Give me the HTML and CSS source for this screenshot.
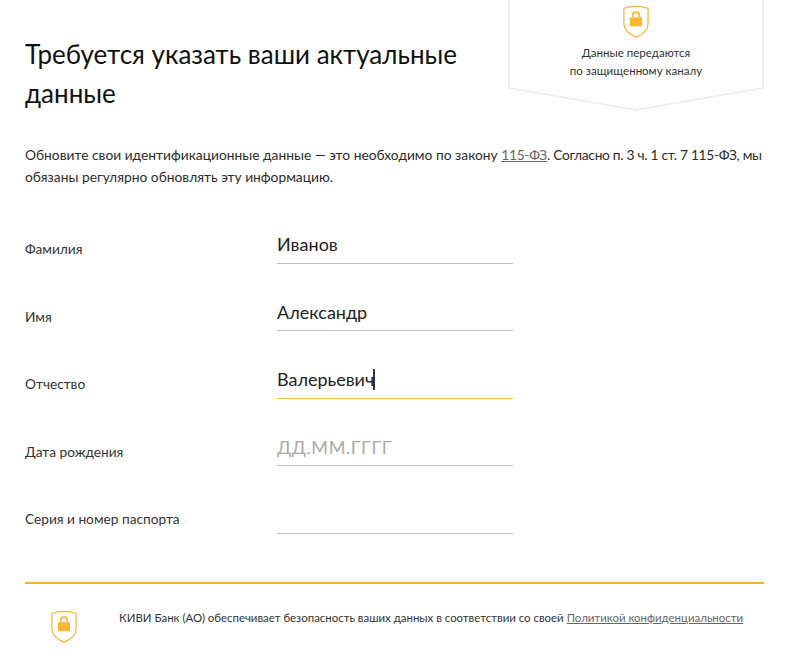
FILE: index.html
```html
<!DOCTYPE html>
<html lang="ru">
<head>
<meta charset="utf-8">
<title>Требуется указать ваши актуальные данные</title>
<link rel="stylesheet" href="styles.css">
</head>
<body>
<main class="page">
  <header class="head">
    <h1 class="title">Требуется указать ваши актуальные данные</h1>
    <aside class="secure">
      <svg class="secure-bg" viewBox="0 0 258 112" preserveAspectRatio="none" aria-hidden="true">
        <path d="M2 0V88L129 110L256 88V0" fill="#fff" stroke="#f1edf3" stroke-width="2"/>
      </svg>
      <svg class="shield" viewBox="0 0 28 36" aria-hidden="true">
        <path d="M1 3.2C9 .6 19 .6 27 3.2V20C27 26.500 21 31.500 14 34.500C7 31.500 1 26.500 1 20Z" fill="#fff" stroke="#fdb632" stroke-width="1.300"/>
        <path d="M10.500 13V10.800a3.500 3.500 0 0 1 7 0V13" fill="none" stroke="#fdb632" stroke-width="1.800"/>
        <rect x="7.500" y="13" width="13" height="9.500" rx="1" fill="#fdb632"/>
      </svg>
      <p class="secure-text">Данные передаются<br>по защищенному каналу</p>
    </aside>
  </header>
  <p class="intro">Обновите свои идентификационные данные — это необходимо по закону <span class="tight"><a class="link" href="#">115-ФЗ</a>. Согласно п. 3 ч. 1 ст. 7 115-ФЗ, мы</span> обязаны регулярно обновлять эту информацию.</p>
  <form class="form">
    <label class="row"><span class="label">Фамилия</span><span class="field">Иванов</span></label>
    <label class="row"><span class="label">Имя</span><span class="field">Александр</span></label>
    <label class="row"><span class="label">Отчество</span><span class="field field-active">Валерьевич<i class="caret"></i></span></label>
    <label class="row"><span class="label">Дата рождения</span><span class="field field-hint">ДД.ММ.ГГГГ</span></label>
    <label class="row"><span class="label">Серия и номер паспорта</span><span class="field"></span></label>
  </form>
  <footer class="foot">
    <svg class="shield" viewBox="0 0 28 36" aria-hidden="true">
      <path d="M1 3.2C9 .6 19 .6 27 3.2V20C27 26.500 21 31.500 14 34.500C7 31.500 1 26.500 1 20Z" fill="#fff" stroke="#fdb632" stroke-width="1.300"/>
      <path d="M10.500 13V10.800a3.500 3.500 0 0 1 7 0V13" fill="none" stroke="#fdb632" stroke-width="1.800"/>
      <rect x="7.500" y="13" width="13" height="9.500" rx="1" fill="#fdb632"/>
    </svg>
    <p class="foot-text">КИВИ Банк (АО) обеспечивает безопасность ваших данных в соответствии со своей <a class="link" href="#">Политикой конфиденциальности</a></p>
  </footer>
</main>
</body>
</html>
```
FILE: styles.css
```css
* { box-sizing: border-box; }
html, body { margin: 0; background: #fff; }
body { font-family: Lato, "Open Sans", sans-serif; color: #2b2b2b; overflow: hidden; }
.page { width: 800px; height: 651px; padding: 0 36px 0 25px; }
.head { display: flex; justify-content: space-between; align-items: flex-start; height: 133px; }
.title { margin: 35px 0 0; width: 470px; font-size: 26px; line-height: 39px; font-weight: 400; color: #111; }
.secure { position: relative; width: 258px; height: 112px; margin-left: auto; margin-right: -1px; display: flex; flex-direction: column; align-items: center; padding-top: 5px; }
.secure-bg { position: absolute; inset: 0; width: 100%; height: 100%; }
.secure .shield { position: relative; }
.shield { width: 26px; height: 34px; flex: none; }
.secure-text { position: relative; margin: 5px 0 0; font-size: 11.500px; line-height: 18px; text-align: center; color: #333; }
.intro { margin: 11px 0 0; font-size: 13.800px; line-height: 22px; color: #2b2b2b; }
.tight { letter-spacing: -.3px; }
.link { color: #666; text-decoration: underline; }
.form { margin-top: 35.750px; display: flex; flex-direction: column; gap: 27.500px; }
.row { display: grid; grid-template-columns: 252px 236px; align-items: center; height: 40px; }
.label { font-size: 13.700px; color: #333; padding-top: 10px; }
.field { display: flex; align-items: center; height: 40px; border-bottom: 1px solid #bdbdbd; font-size: 18px; color: #222; padding-top: 2px; }
.field-active { border-bottom-color: #fdc040; }
.field-hint { color: #a9a9a9; font-size: 18px; letter-spacing: .6px; }
.caret { display: block; width: 2px; height: 21px; background: #333; margin-left: -1px; }
.foot { margin-top: 48px; border-top: 2px solid #fdb027; display: flex; align-items: flex-start; padding: 26px 0 0 26px; gap: 42px; }
.foot-text { margin: -1px 0 0; font-size: 11.430px; line-height: 18px; color: #333; white-space: nowrap; }
```
